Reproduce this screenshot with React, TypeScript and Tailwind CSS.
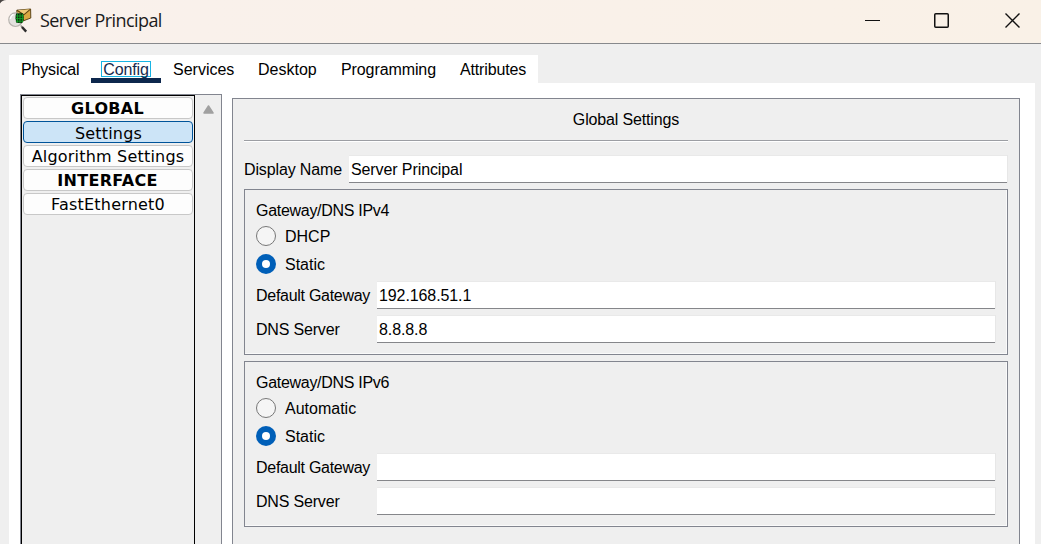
import React from "react";

function AppIcon() {
  return (
    <svg width="24" height="25" viewBox="0 0 24 25" className="shrink-0">
      <path d="M12.7 17.5 L15 20" stroke="#8b8883" strokeWidth="1.4" />
      <path d="M14 19 L18.2 23.6" stroke="#2c2c2c" strokeWidth="2.4" />
      <path d="M8.8 2.2 L22.6 1 L22.8 10 L15 13 L9 11 Z" fill="#d9a842" stroke="#4f3a12" strokeWidth=".9" />
      <path d="M9 2.2 L15.8 6.8 L22.5 1.2" fill="#efca78" stroke="#5e430f" strokeWidth="1.1" />
      <circle cx="7.5" cy="11.7" r="6.8" fill="#e3e1de" stroke="#b7b3ae" strokeWidth="1.1" />
      <path d="M8 5.5 L14.5 5 Q16.3 8 15.8 11.5 Q15.3 14.2 13.5 15.2 L8.3 14.8 Q6.8 10 8 5.5 Z" fill="#0d2a0c" />
      <path d="M9.4 5.6 V14.8 M12 5.4 V15 M14.4 5.8 V14.5 M7.6 8 H15.8 M7.5 10.6 H15.8 M7.8 13.2 H15" stroke="#12a526" strokeWidth=".9" />
      <path d="M2.3 11 Q2.8 7.6 5.6 6.4" stroke="#fff" strokeWidth="1.4" fill="none" />
    </svg>
  );
}

function TitleBar() {
  return (
    <header className="relative flex h-11 shrink-0 items-start border-b border-[#87898c] bg-linear-to-r from-[#f9f1ec] to-[#f9f1e7]">
      <svg width="7" height="4" viewBox="0 0 7 4" className="absolute left-0 top-0">
        <path d="M0 0 H6.5 Q2 .4 0 3.5 Z" fill="#4a4644" />
      </svg>
      <div className="pl-2 pt-2">
        <AppIcon />
      </div>
      <h1 className="pl-2 pt-[8px] font-['Open_Sans','Noto_Sans',sans-serif] text-[18px] leading-6 tracking-[-0.57px] text-[#1b1b1b]">
        Server Principal
      </h1>
      <svg width="156" height="16" viewBox="0 0 156 16" className="ml-auto mr-5 mt-[13px] shrink-0" fill="none" stroke="#111">
        <path d="M0 7.5 H15" strokeWidth="1" />
        <rect x="69.75" y=".75" width="13.5" height="13.5" rx="1" strokeWidth="1.5" />
        <path d="M140.5 .5 L154.5 14.5 M154.5 .5 L140.5 14.5" strokeWidth="1.4" />
      </svg>
    </header>
  );
}

function Tabs() {
  return (
    <nav className="flex h-7 w-[529px] shrink-0 bg-white leading-[30px]">
      <span className="ml-3 w-[70px] tracking-[-0.15px]">Physical</span>
      <span className="flex w-[70px] flex-col items-center border-b-[5px] border-[#0d274d] pt-[6px] text-[#17294d]">
        <span className="h-4 w-[50px] border border-[#18b4e4] text-center leading-[15px] tracking-[-0.1px]">Config</span>
      </span>
      <span className="ml-3 w-[85px]">Services</span>
      <span className="w-[83px]">Desktop</span>
      <span className="w-[119px] tracking-[-0.1px]">Programming</span>
      <span className="tracking-[-0.15px]">Attributes</span>
    </nav>
  );
}

function SideButton({ label, heading, selected }: { label: string; heading?: boolean; selected?: boolean }) {
  return (
    <button
      className={`flex h-[22px] w-[170px] shrink-0 items-center justify-center whitespace-nowrap rounded-[4px] border ${
        selected ? "border-[#00549a] bg-[#cce4f7] pl-px pt-[3px]" : "border-[#c8c8c8] bg-[#fdfdfd] pt-[2px]"
      } ${heading ? "pr-px font-bold tracking-[0.3px]" : "tracking-[0.2px]"}`}
    >
      {label}
    </button>
  );
}

function Sidebar() {
  return (
    <aside className="flex w-[202px] shrink-0 border border-b-0 border-[#82858f] bg-[#efefef]">
      <div className="flex w-[174px] flex-col gap-[2px] border border-b-0 border-black px-px pt-px font-['DejaVu_Sans',sans-serif] text-[16px] leading-5">
        <SideButton label="GLOBAL" heading />
        <SideButton label="Settings" selected />
        <SideButton label="Algorithm Settings" />
        <SideButton label="INTERFACE" heading />
        <SideButton label="FastEthernet0" />
      </div>
      <svg width="12" height="9" viewBox="0 0 12 9" className="ml-2 mt-[10px]">
        <path d="M5.5 1 L10 8 H1 Z" fill="#a0a0a0" stroke="#a0a0a0" strokeWidth="1.5" strokeLinejoin="round" />
      </svg>
    </aside>
  );
}

function Field({ label, value, wide }: { label: string; value: string; wide?: boolean }) {
  return (
    <div className="flex h-7 shrink-0 leading-[30px]">
      <span
        className={
          wide
            ? "w-[105px] tracking-[-0.13px]"
            : label.length > 10
              ? "w-[121px] tracking-[-0.28px]"
              : "w-[121px] tracking-[-0.18px]"
        }
      >
        {label}
      </span>
      <div className="mr-px flex-1 border-b border-t border-b-[#85868a] border-t-[#e9e9e9] bg-white pl-[2px] leading-[28px] tracking-[-0.1px] shadow-[1px_0_0_#e7e7e7]">
        {value}
      </div>
    </div>
  );
}

function Radio({ label, checked }: { label: string; checked?: boolean }) {
  return (
    <div className="flex h-7 shrink-0 items-center">
      <span
        className={
          checked
            ? "mr-[9px] flex size-5 items-center justify-center rounded-full bg-[#005fb8]"
            : "mr-[9px] size-5 rounded-full border border-[#777] bg-[#f5f5f5]"
        }
      >
        {checked && <span className="size-2 rounded-full bg-white" />}
      </span>
      <span className="pt-[2px]">{label}</span>
    </div>
  );
}

function Group({ title, first, gateway, dns }: { title: string; first: string; gateway: string; dns: string }) {
  return (
    <section className="mt-[6px] flex h-[166px] shrink-0 flex-col border border-[#82858f] pl-[11px] pr-[11px] pt-[10px] shadow-[inset_-1px_-1px_0_#fafafa]">
      <h2 className="h-[22px] shrink-0 leading-[22px] tracking-[-0.29px]">{title}</h2>
      <Radio label={first} />
      <Radio label="Static" checked />
      <div className="mt-[3px] flex shrink-0 flex-col gap-[6px]">
        <Field label="Default Gateway" value={gateway} />
        <Field label="DNS Server" value={dns} />
      </div>
    </section>
  );
}

export default function App() {
  return (
    <div className="flex h-[544px] w-[1041px] flex-col overflow-hidden bg-[#efefef] font-['Liberation_Sans',Arial,sans-serif] text-[16px] text-black">
      <TitleBar />
      <main className="flex min-h-0 flex-1 flex-col pl-[9px] pr-[6px] pt-[11px]">
        <Tabs />
        <div className="flex min-h-0 flex-1 bg-white pl-[11px] pr-[15px] pt-[11px]">
          <Sidebar />
          <section className="ml-[10px] mt-1 flex flex-1 flex-col border border-b-0 border-[#82858f] bg-[#efefef] px-[11px]">
            <h2 className="h-[41px] shrink-0 text-center leading-[41px] tracking-[-0.15px]">Global Settings</h2>
            <div className="mb-[13px] h-[2px] shrink-0 border-b border-t border-b-white border-t-[#9c9ea3]" />
            <Field label="Display Name" value="Server Principal" wide />
            <Group title="Gateway/DNS IPv4" first="DHCP" gateway="192.168.51.1" dns="8.8.8.8" />
            <Group title="Gateway/DNS IPv6" first="Automatic" gateway="" dns="" />
          </section>
        </div>
      </main>
    </div>
  );
}
